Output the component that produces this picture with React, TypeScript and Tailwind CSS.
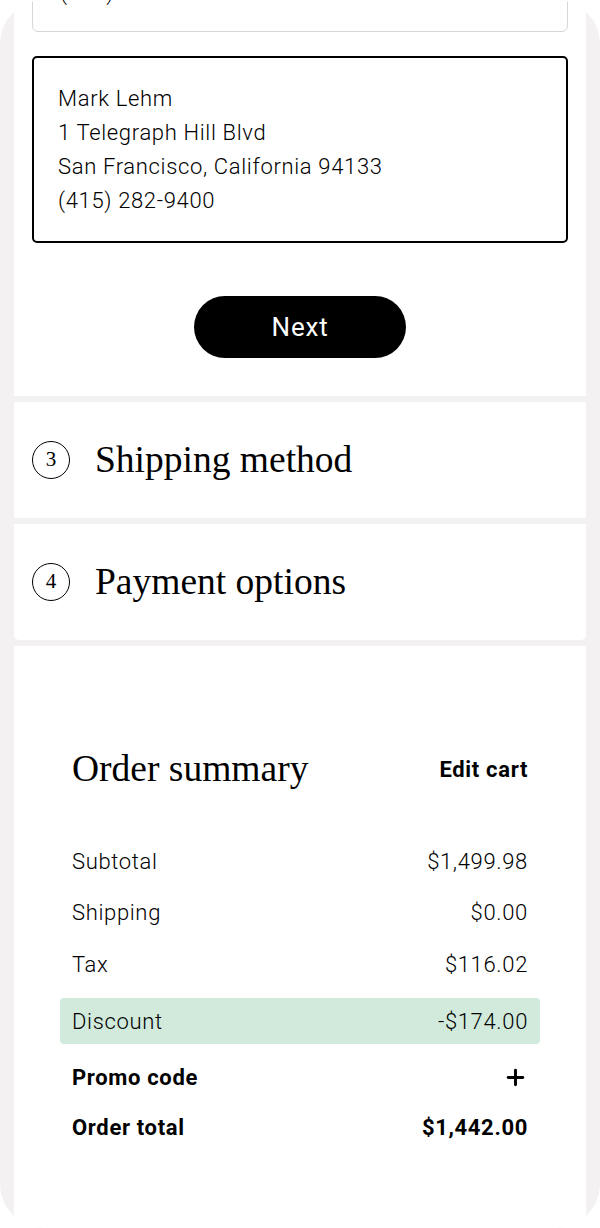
import { Plus } from 'lucide-react';

const sans = "font-['Roboto','Liberation_Sans',sans-serif]";
const serif = "font-['Liberation_Serif','DejaVu_Serif',serif]";

function StepRow({ n, title, last }: { n: number; title: string; last?: boolean }) {
  return (
    <div className={`bg-white h-[116px] flex items-center pl-[18px] ${last ? 'rounded-b-[5px]' : ''}`}>
      <div className={`w-[38px] h-[38px] rounded-full border-[1.5px] border-black flex items-center justify-center text-[21px] text-black ${serif}`}>
        {n}
      </div>
      <h2 className={`ml-[25px] text-[37.5px] text-black leading-none ${serif}`}>{title}</h2>
    </div>
  );
}

function SummaryRow({ label, value, bold }: { label: string; value: React.ReactNode; bold?: boolean }) {
  return (
    <div className={`h-[46px] flex items-center justify-between text-black ${bold ? 'font-bold text-[22px] tracking-[0.03em]' : 'font-light text-[22px] tracking-[0.03em]'}`}>
      <span>{label}</span>
      <span>{value}</span>
    </div>
  );
}

export default function App() {
  return (
    <div className="bg-white">
      <div className={`h-[1228px] rounded-[44px] overflow-hidden bg-[#f3f1f1] px-[14px] flex flex-col gap-[6px] ${sans}`}>
        {/* address step */}
        <div className="bg-white px-[18px] pb-[38px] flex flex-col">
          <div className="-mt-[30px] h-[62px] border border-[#d6d6d6] rounded-b-[6px] pl-[27px] flex items-end pb-[27px] text-[22px] font-light tracking-[0.03em] text-black leading-none">
            (415) 282-9400
          </div>
          <div className="mt-[24px] border-2 border-black rounded-[5px] pl-[24px] pt-[24px] pb-[23px] text-[22px] font-light tracking-[0.03em] leading-[34px] text-black">
            <p>Mark Lehm</p>
            <p>1 Telegraph Hill Blvd</p>
            <p>San Francisco, California 94133</p>
            <p>(415) 282-9400</p>
          </div>
          <button className="mt-[53px] self-center w-[212px] h-[62px] rounded-full bg-black text-white text-[26px] tracking-[0.03em]">
            Next
          </button>
        </div>

        <StepRow n={3} title="Shipping method" />
        <StepRow n={4} title="Payment options" last />

        {/* order summary */}
        <div className="flex-1 bg-white px-[58px] pt-[103px]">
          <div className="flex items-center justify-between h-[40px]">
            <h2 className={`text-[37.5px] text-black leading-none ${serif}`}>Order summary</h2>
            <span className="text-[22px] font-bold tracking-[0.03em] text-black">Edit cart</span>
          </div>
          <div className="mt-[49px] flex flex-col">
            <SummaryRow label="Subtotal" value="$1,499.98" />
            <div className="mt-[5px]"><SummaryRow label="Shipping" value="$0.00" /></div>
            <div className="mt-[6px]"><SummaryRow label="Tax" value="$116.02" /></div>
            <div className="mt-[11px] -mx-[12px] px-[12px] bg-[#d1eadc] rounded-[4px]">
              <SummaryRow label="Discount" value="-$174.00" />
            </div>
            <div className="mt-[10px]">
              <SummaryRow label="Promo code" value={<Plus size={25} strokeWidth={2.8} />} bold />
            </div>
            <div className="mt-[4px]"><SummaryRow label="Order total" value="$1,442.00" bold /></div>
          </div>
        </div>
      </div>
    </div>
  );
}
